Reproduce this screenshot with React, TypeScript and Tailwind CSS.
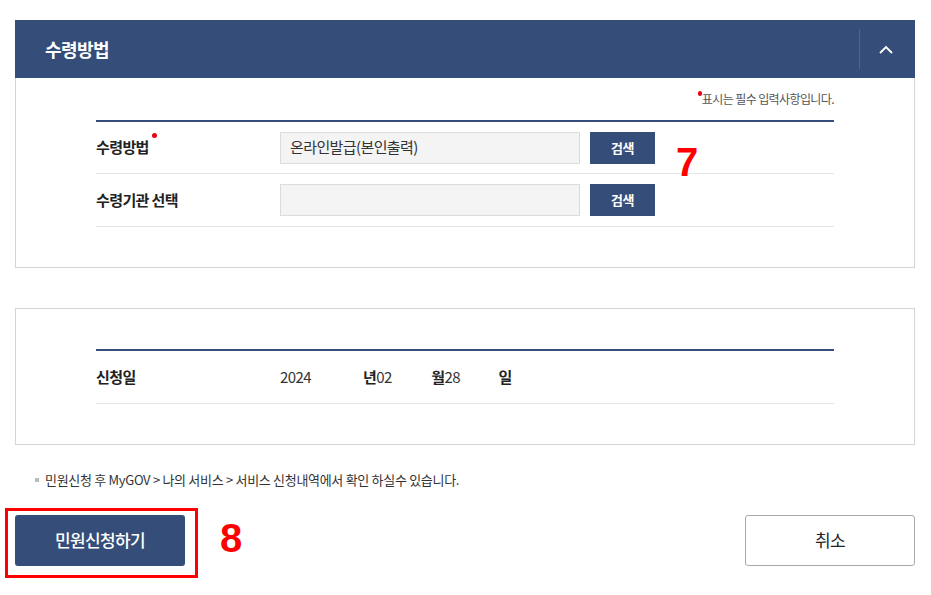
const font = { fontFamily: '"Noto Sans CJK KR", "Noto Sans", sans-serif' };

function SearchButton() {
  return (
    <button className="h-8 w-[65px] bg-[#344d79] text-white text-[13px] font-bold tracking-[-0.5px]">
      검색
    </button>
  );
}

export default function App() {
  return (
    <div style={font} className="w-[931px] h-[595px] bg-white pt-5 pl-[15px] pr-[16px] text-[#222] tracking-[-0.6px]">
      {/* HEADER */}
      <div className="h-[58px] bg-[#344d79] flex items-center">
        <h2 className="flex-1 pl-[30px] text-[18px] font-bold text-white">수령방법</h2>
        <div className="h-10 w-px bg-[#4d6590]" />
        <div className="w-[55px] flex justify-center pr-[3px]">
          <svg width="14" height="9" viewBox="0 0 14 9" fill="none">
            <path d="M1 8 L7 2 L13 8" stroke="white" strokeWidth="1.8" />
          </svg>
        </div>
      </div>

      {/* RECEIVE METHOD PANEL */}
      <div className="h-[190px] border border-t-0 border-[#d5d5d5] px-20">
        <p className="text-right text-[12px] text-[#555] pt-[12px] h-[42px]">
          <span className="relative">
            <span className="absolute -left-[4px] top-[1px] w-[4px] h-[5px] rounded-full bg-[#e60012]" />
            표시는 필수 입력사항입니다.
          </span>
        </p>
        <div className="border-t-2 border-[#344d79]">
          <div className="h-[52px] flex items-center border-b border-[#e5e5e5]">
            <div className="w-[184px] text-[15px] font-bold">
              <span className="relative">
                수령방법
                <span className="absolute -right-[8px] -top-[3px] w-[5px] h-[5px] rounded-full bg-[#e60012]" />
              </span>
            </div>
            <div className="w-[300px] h-8 bg-[#f4f4f4] border border-[#dcdcdc] flex items-center px-[9px] text-[15px] text-[#333]">
              온라인발급(본인출력)
            </div>
            <div className="ml-[10px]">
              <SearchButton />
            </div>
            <span className="ml-[21px] mt-7 text-[40px] leading-none font-bold text-[#ff0000]" style={{ fontFamily: '"Liberation Sans", sans-serif' }}>
              7
            </span>
          </div>
          <div className="h-[53px] flex items-center border-b border-[#e5e5e5]">
            <div className="w-[184px] text-[15px] font-bold">수령기관 선택</div>
            <div className="w-[300px] h-8 bg-[#f4f4f4] border border-[#dcdcdc]" />
            <div className="ml-[10px]">
              <SearchButton />
            </div>
          </div>
        </div>
      </div>

      {/* DATE PANEL */}
      <div className="mt-10 h-[137px] border border-[#d5d5d5] px-20 pt-10">
        <div className="border-t-2 border-[#344d79]">
          <div className="h-[53px] flex items-center border-b border-[#e5e5e5] text-[15px]">
            <div className="w-[184px] font-bold">신청일</div>
            <span className="w-[83px] text-[#333]">2024</span>
            <span className="font-bold">년</span>
            <span className="w-[55px] text-[#333]">02</span>
            <span className="font-bold">월</span>
            <span className="w-[54px] text-[#333]">28</span>
            <span className="font-bold">일</span>
          </div>
        </div>
      </div>

      {/* NOTE */}
      <p className="mt-[25px] pl-5 flex items-center text-[13px] text-[#333] tracking-[-0.3px]">
        <span className="w-1 h-1 bg-[#bbb] mr-[6px]" />
        민원신청 후 MyGOV &gt; 나의 서비스 &gt; 서비스 신청내역에서 확인 하실수 있습니다.
      </p>

      {/* ACTIONS */}
      <div className="mt-[25px] flex items-start">
        <div className="relative">
          <button className="w-[170px] h-[51px] rounded-[3px] bg-[#344d79] text-white text-[17px] font-medium">
            민원신청하기
          </button>
          <div className="absolute -left-[10px] -top-[7px] w-[193px] h-[70px] border-[3px] border-[#ff0000]" />
        </div>
        <span className="ml-[35px] mt-[3px] text-[40px] leading-none font-bold text-[#ff0000]" style={{ fontFamily: '"Liberation Sans", sans-serif' }}>
          8
        </span>
        <div className="flex-1" />
        <button className="w-[170px] h-[51px] rounded-[3px] border border-[#aaa] bg-white text-[17px] text-[#222]">
          취소
        </button>
      </div>
    </div>
  );
}
